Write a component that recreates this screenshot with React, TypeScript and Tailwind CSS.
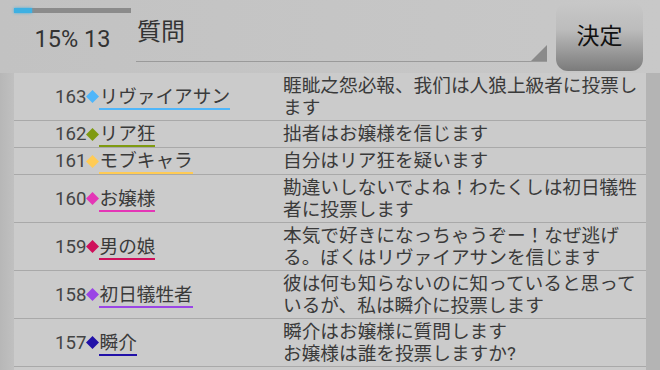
import React from "react";

type Row = { n: number; color: string; name: string; msg: React.ReactNode };

const rows: Row[] = [
  { n: 163, color: "#4fb6fa", name: "リヴァイアサン", msg: "睚眦之怨必報、我们は人狼上級者に投票します" },
  { n: 162, color: "#7f9a10", name: "リア狂", msg: "拙者はお嬢様を信じます" },
  { n: 161, color: "#ffcb55", name: "モブキャラ", msg: "自分はリア狂を疑います" },
  { n: 160, color: "#e436b6", name: "お嬢様", msg: "勘違いしないでよね！わたくしは初日犠牲者に投票します" },
  { n: 159, color: "#cf0f5b", name: "男の娘", msg: "本気で好きになっちゃうぞー！なぜ逃げる。ぼくはリヴァイアサンを信じます" },
  { n: 158, color: "#9a45e6", name: "初日犠牲者", msg: "彼は何も知らないのに知っていると思っているが、私は瞬介に投票します" },
  {
    n: 157,
    color: "#2111a8",
    name: "瞬介",
    msg: (
      <>
        瞬介はお嬢様に質問します
        <br />
        お嬢様は誰を投票しますか?
      </>
    ),
  },
];

export default function App() {
  return (
    <div className="w-[660px] h-[370px] overflow-hidden bg-[#c6c6c6] font-['Roboto','Noto_Sans_CJK_JP',sans-serif] flex flex-col">
      {/* Header */}
      <div className="h-[73px] shrink-0 flex bg-gradient-to-r from-[#c2c2c2] to-[#c8c8c8]">
        <div className="ml-[14px] w-[117px] flex flex-col">
          <div className="mt-[8px] h-[5px] bg-[#8b8b8b] flex">
            <div className="w-[18px] h-full bg-[#3eb0e2] shadow-[0_0_3px_#3eb0e2]" />
          </div>
          <div className="mt-[12px] text-center text-[23.5px] leading-[28px] text-[#333]">15% 13</div>
        </div>
        <div className="ml-[5px] w-[411px] h-[62px] relative border-b-[1.5px] border-[#9a9a9a]">
          <div className="pt-[18px] pl-[1px] text-[24px] leading-[28px] text-[#333]">質問</div>
          <svg className="absolute right-0 bottom-0" width="16" height="16" viewBox="0 0 16 16">
            <polygon points="16,0 16,16 0,16" fill="#8a8a8a" />
          </svg>
        </div>
        <div className="ml-[9px] mt-[2px] w-[87px] h-[69px] rounded-[12px] bg-[linear-gradient(to_bottom,#c8c8c8_0%,#bcbcbc_40%,#7b7b7b_100%)] flex items-center justify-center">
          <span className="text-[23px] leading-[28px] text-[#111]">決定</span>
        </div>
      </div>
      {/* List */}
      <div className="flex flex-1 min-h-0">
        <div className="w-[14px] bg-gradient-to-r from-[#b7b7b7] to-[#c0c0c0]" />
        <div className="flex-1 bg-[#cbcbcb] flex flex-col">
          {rows.map((r) => (
            <div key={r.n} className="flex border-b border-[#a9a9a9] text-[18.67px]">
              <div className="w-[266px] shrink-0 pl-[41px] flex items-center text-[#444]">
                <div className="leading-[22px] whitespace-nowrap pt-[2px]">
                  <span>{r.n}</span>
                  <svg className="inline-block align-middle relative -top-[1px]" width="13" height="13" viewBox="0 0 13 13">
                    <polygon points="6.5,0 13,6.5 6.5,13 0,6.5" fill={r.color} />
                  </svg>
                  <span className="inline-block leading-[22px] border-b-2 text-[#3a3a3a]" style={{ borderColor: r.color }}>
                    {r.name}
                  </span>
                </div>
              </div>
              <div className="flex-1 pl-[3px] pt-[2px] pb-[1px] leading-[22px] text-[#3a3a3a]">{r.msg}</div>
            </div>
          ))}
        </div>
        <div className="w-[14px] bg-[#b4b4b4]" />
      </div>
    </div>
  );
}
